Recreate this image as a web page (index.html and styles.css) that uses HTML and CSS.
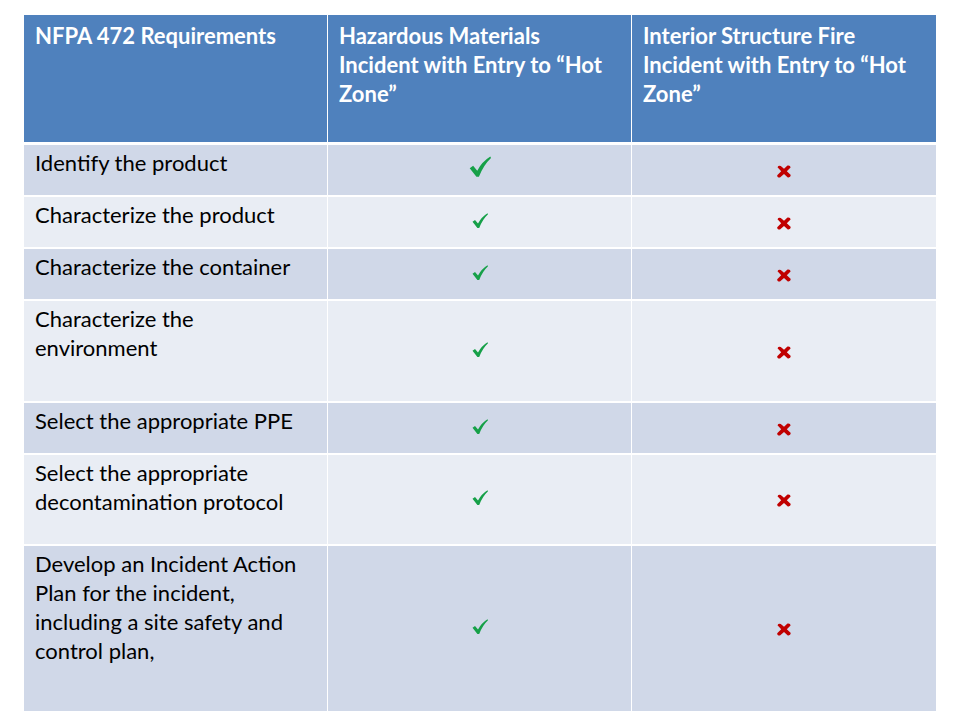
FILE: index.html
```html
<!DOCTYPE html>
<html>
<head>
<meta charset="utf-8">
<link rel="stylesheet" href="styles.css">
</head>
<body>
<div class="slide">
<table class="req">
  <colgroup><col class="c1"><col class="c2"><col class="c3"></colgroup>
  <thead>
    <tr class="h">
      <th>NFPA 472 Requirements</th>
      <th>Hazardous Materials<br>Incident with Entry to “Hot<br>Zone”</th>
      <th>Interior Structure Fire<br>Incident with Entry to “Hot<br>Zone”</th>
    </tr>
  </thead>
  <tbody>
    <tr class="r1 odd">
      <td>Identify the product</td>
      <td class="ic"><svg class="chk big" viewBox="0 0 16 16"><path d="M0.5 9.2 L3 7.4 L6 11 Q9.5 4.5 15.5 0.8 L16 1.8 Q10.5 7 7.2 15.5 L5.4 15.5 Z" fill="#16a048"/></svg></td>
      <td class="ic"><svg class="x" viewBox="0 0 16 13"><path d="M1.5 2.2 Q2.5 0.2 4.8 1 L8 3.8 L11.5 0.6 Q14.5 0.2 14.6 2.4 L10.8 6.3 L14.8 10 Q14.6 12.8 11.8 12.4 L8 9 L4 12.6 Q1 12.8 1.2 10.2 L5.2 6.3 Z" fill="#c00000"/></svg></td>
    </tr>
    <tr class="r2 even">
      <td>Characterize the product</td>
      <td class="ic"><svg class="chk" viewBox="0 0 16 16"><path d="M0.5 9.2 L3 7.4 L6 11 Q9.5 4.5 15.5 0.8 L16 1.8 Q10.5 7 7.2 15.5 L5.4 15.5 Z" fill="#16a048"/></svg></td>
      <td class="ic"><svg class="x" viewBox="0 0 16 13"><path d="M1.5 2.2 Q2.5 0.2 4.8 1 L8 3.8 L11.5 0.6 Q14.5 0.2 14.6 2.4 L10.8 6.3 L14.8 10 Q14.6 12.8 11.8 12.4 L8 9 L4 12.6 Q1 12.8 1.2 10.2 L5.2 6.3 Z" fill="#c00000"/></svg></td>
    </tr>
    <tr class="r3 odd">
      <td>Characterize the container</td>
      <td class="ic"><svg class="chk" viewBox="0 0 16 16"><path d="M0.5 9.2 L3 7.4 L6 11 Q9.5 4.5 15.5 0.8 L16 1.8 Q10.5 7 7.2 15.5 L5.4 15.5 Z" fill="#16a048"/></svg></td>
      <td class="ic"><svg class="x" viewBox="0 0 16 13"><path d="M1.5 2.2 Q2.5 0.2 4.8 1 L8 3.8 L11.5 0.6 Q14.5 0.2 14.6 2.4 L10.8 6.3 L14.8 10 Q14.6 12.8 11.8 12.4 L8 9 L4 12.6 Q1 12.8 1.2 10.2 L5.2 6.3 Z" fill="#c00000"/></svg></td>
    </tr>
    <tr class="r4 even">
      <td>Characterize the<br>environment</td>
      <td class="ic"><svg class="chk" viewBox="0 0 16 16"><path d="M0.5 9.2 L3 7.4 L6 11 Q9.5 4.5 15.5 0.8 L16 1.8 Q10.5 7 7.2 15.5 L5.4 15.5 Z" fill="#16a048"/></svg></td>
      <td class="ic"><svg class="x" viewBox="0 0 16 13"><path d="M1.5 2.2 Q2.5 0.2 4.8 1 L8 3.8 L11.5 0.6 Q14.5 0.2 14.6 2.4 L10.8 6.3 L14.8 10 Q14.6 12.8 11.8 12.4 L8 9 L4 12.6 Q1 12.8 1.2 10.2 L5.2 6.3 Z" fill="#c00000"/></svg></td>
    </tr>
    <tr class="r5 odd">
      <td>Select the appropriate PPE</td>
      <td class="ic"><svg class="chk" viewBox="0 0 16 16"><path d="M0.5 9.2 L3 7.4 L6 11 Q9.5 4.5 15.5 0.8 L16 1.8 Q10.5 7 7.2 15.5 L5.4 15.5 Z" fill="#16a048"/></svg></td>
      <td class="ic"><svg class="x" viewBox="0 0 16 13"><path d="M1.5 2.2 Q2.5 0.2 4.8 1 L8 3.8 L11.5 0.6 Q14.5 0.2 14.6 2.4 L10.8 6.3 L14.8 10 Q14.6 12.8 11.8 12.4 L8 9 L4 12.6 Q1 12.8 1.2 10.2 L5.2 6.3 Z" fill="#c00000"/></svg></td>
    </tr>
    <tr class="r6 even">
      <td>Select the appropriate<br>decontamination protocol</td>
      <td class="ic"><svg class="chk" viewBox="0 0 16 16"><path d="M0.5 9.2 L3 7.4 L6 11 Q9.5 4.5 15.5 0.8 L16 1.8 Q10.5 7 7.2 15.5 L5.4 15.5 Z" fill="#16a048"/></svg></td>
      <td class="ic"><svg class="x" viewBox="0 0 16 13"><path d="M1.5 2.2 Q2.5 0.2 4.8 1 L8 3.8 L11.5 0.6 Q14.5 0.2 14.6 2.4 L10.8 6.3 L14.8 10 Q14.6 12.8 11.8 12.4 L8 9 L4 12.6 Q1 12.8 1.2 10.2 L5.2 6.3 Z" fill="#c00000"/></svg></td>
    </tr>
    <tr class="r7 odd">
      <td>Develop an Incident Action<br>Plan for the incident,<br>including a site safety and<br>control plan,</td>
      <td class="ic"><svg class="chk" viewBox="0 0 16 16"><path d="M0.5 9.2 L3 7.4 L6 11 Q9.5 4.5 15.5 0.8 L16 1.8 Q10.5 7 7.2 15.5 L5.4 15.5 Z" fill="#16a048"/></svg></td>
      <td class="ic"><svg class="x" viewBox="0 0 16 13"><path d="M1.5 2.2 Q2.5 0.2 4.8 1 L8 3.8 L11.5 0.6 Q14.5 0.2 14.6 2.4 L10.8 6.3 L14.8 10 Q14.6 12.8 11.8 12.4 L8 9 L4 12.6 Q1 12.8 1.2 10.2 L5.2 6.3 Z" fill="#c00000"/></svg></td>
    </tr>
  </tbody>
</table>
</div>
</body>
</html>
```
FILE: styles.css
```css
html, body {
  margin: 0;
  padding: 0;
  background: #ffffff;
}
.slide {
  width: 960px;
  height: 720px;
  padding: 15px 24px 0 24px;
  box-sizing: border-box;
}
.req {
  width: 912px;
  border-collapse: separate;
  border-spacing: 0;
  table-layout: fixed;
  font-family: "Lato", "Open Sans", sans-serif;
  font-size: 22px;
  line-height: 29px;
  color: #000000;
}
.req col { width: 304px; }
.req th, .req td {
  padding: 3px 6px 0 11px;
  vertical-align: top;
  text-align: left;
  border-right: 1px solid #ffffff;
  border-bottom: 2px solid #ffffff;
  box-sizing: border-box;
  white-space: nowrap;
}
.req th:last-child, .req td:last-child { border-right: 0; }
.req th {
  background: #4f81bd;
  color: #ffffff;
  font-weight: 700;
  border-bottom: 3px solid #ffffff;
  padding-top: 6px;
}
.req tr.odd td { background: #d0d8e8; }
.req tr.even td { background: #e9edf4; }
.req tr.r7 td { border-bottom: 0; }
.req td.ic {
  text-align: center;
  vertical-align: middle;
  padding: 0;
  line-height: 0;
}
.h { height: 130px; }
.r1 { height: 52px; }
.r2 { height: 52px; }
.r3 { height: 52px; }
.r4 { height: 102px; }
.r5 { height: 52px; }
.r6 { height: 91px; }
.r7 { height: 165px; }
.chk { width: 16px; height: 17px; position: relative; top: -2px; }
.chk.big { width: 22px; height: 23px; top: -4px; }
.x { width: 16px; height: 13px; position: relative; top: 1px; }
```
